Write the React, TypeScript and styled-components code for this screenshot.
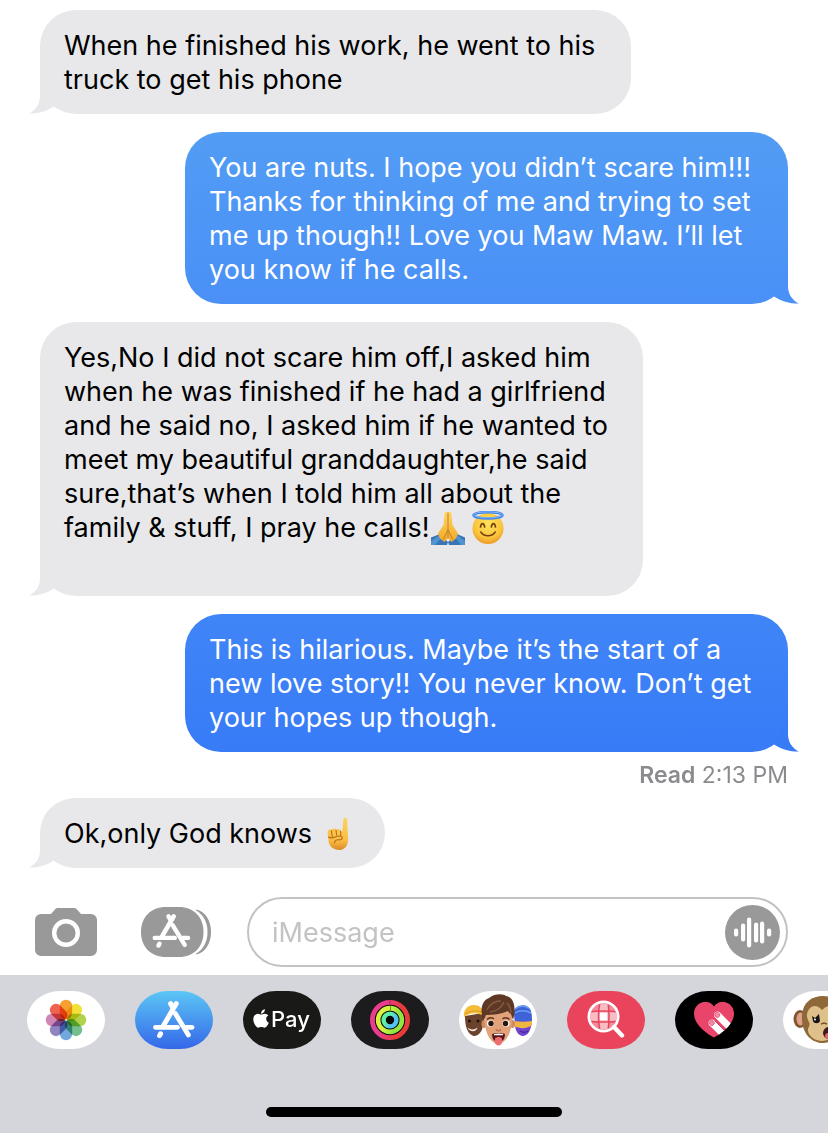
import React from "react";
import styled, { createGlobalStyle } from "styled-components";
import { FaApple } from "react-icons/fa";

const GlobalStyle = createGlobalStyle`
  * { box-sizing: border-box; }
  body {
    margin: 0;
    background: #ffffff;
    color: #000000;
    font-family: Inter, "Noto Sans", sans-serif;
    overflow-x: hidden;
  }
  button { border: 0; padding: 0; background: none; cursor: pointer; }
`;

const Page = styled.div`
  display: flex;
  flex-direction: column;
  min-height: 100vh;
  overflow: hidden;
`;

const Thread = styled.ol`
  list-style: none;
  margin: 0;
  padding: 10px 40px 11px;
  display: flex;
  flex-direction: column;
`;

const Message = styled.li<{ $sent?: boolean; $receipt?: boolean }>`
  display: flex;
  flex-direction: column;
  align-items: ${(p) => (p.$sent ? "flex-end" : "flex-start")};
  margin-bottom: ${(p) => (p.$receipt ? 0 : 18)}px;
`;

const Bubble = styled.div<{ $from: string; $to: string; $ink: string; $width: number }>`
  position: relative;
  width: ${(p) => p.$width}px;
  max-width: 100%;
  padding: 19px 24px 17px;
  border-radius: 36px;
  background: linear-gradient(${(p) => p.$from}, ${(p) => p.$to});
  color: ${(p) => p.$ink};
  font-size: 27px;
  line-height: 34px;
  white-space: pre-line;
`;

const TailShape = styled.svg<{ $sent?: boolean }>`
  position: absolute;
  bottom: 0;
  ${(p) => (p.$sent ? "right: -11px; transform: scaleX(-1);" : "left: -11px;")}
`;

const Emoji = styled.svg`
  width: 36px;
  height: 34px;
  margin-right: 4px;
  vertical-align: bottom;
`;

const Receipt = styled.div`
  color: #8b8b8f;
  font-size: 23px;
  line-height: 46px;
  b { font-weight: 600; }
`;

const Composer = styled.form`
  display: flex;
  align-items: center;
  gap: 35px;
  padding: 0 40px 8px 35px;
`;

const ToolButton = styled.button`
  display: flex;
  width: 71px;
  flex: none;
`;

const Field = styled.div`
  flex: 1;
  min-width: 0;
  display: flex;
  align-items: center;
  height: 70px;
  padding: 0 6px 0 23px;
  border: 2px solid #c3c3c5;
  border-radius: 35px;
`;

const TextInput = styled.input`
  flex: 1;
  min-width: 0;
  border: 0;
  outline: 0;
  padding: 2px 0 0;
  background: transparent;
  font: 27px/34px Inter, "Noto Sans", sans-serif;
  &::placeholder { color: #c3c3c6; opacity: 1; }
`;

const VoiceButton = styled.button`
  display: flex;
  width: 55px;
  height: 55px;
`;

const Drawer = styled.footer`
  flex: 1;
  display: flex;
  flex-direction: column;
  justify-content: space-between;
  align-items: center;
  gap: 40px;
  padding: 16px 0;
  background: #d5d6dc;
`;

const AppStrip = styled.nav`
  align-self: stretch;
  display: flex;
  gap: 30px;
  padding-left: 27px;
  overflow: hidden;
`;

const AppButton = styled.button<{ $bg: string }>`
  flex: none;
  display: flex;
  align-items: center;
  justify-content: center;
  width: 78px;
  height: 58px;
  overflow: hidden;
  border-radius: 34px / 30px;
  background: ${(p) => p.$bg};
`;

const PayMark = styled.span`
  display: flex;
  align-items: center;
  gap: 2px;
  padding: 0 1px 3px 0;
  color: #ffffff;
  font: 500 22px/26px Inter, sans-serif;
  svg { width: 16px; height: 21px; }
`;

const HomeIndicator = styled.div`
  width: 296px;
  height: 10px;
  border-radius: 5px;
  background: #000000;
`;

const Tail = ({ color, sent }: { color: string; sent?: boolean }) => (
  <TailShape $sent={sent} width="36" height="36" viewBox="0 0 36 36" aria-hidden="true">
    <path d="M11 0V18C11 26 7 32 0 35.6C9 35.8 18 33 25 28.4L26 27.5A36 36 0 0 1 12 0Z" fill={color} />
  </TailShape>
);

const PrayingHands = () => (
  <Emoji viewBox="0 0 36 34" role="img" aria-label="Folded hands">
    <defs>
      <linearGradient id="pray" x1="0" y1="0" x2="0" y2="1">
        <stop offset="0" stopColor="#ffd65a" />
        <stop offset="1" stopColor="#f2a92b" />
      </linearGradient>
    </defs>
    <path d="M1 26.5L10 23l8 8-1 3H1zM35 26.5L27 23l-9 8 1 3h16z" fill="#3775b8" />
    <path d="M1 30l9-6 3 1-8 9H1zM35 30l-8-6-3 1 7 9h4z" fill="#4f93d2" />
    <path d="M17.8 1.5C16.6 0 14.700 .8 14.600 3L13.500 14 8 22.500l2 5 4.500 3.500 3.400-4z" fill="url(#pray)" />
    <path d="M18.200 1.500C19.400 0 21.300 .8 21.400 3l1.100 11L28 22.500l-2 5-4.500 3.500-3.400-4z" fill="url(#pray)" />
    <path d="M18 2v25M18 19l-4.500 9M18 19l4.500 9" stroke="#c37c1c" strokeWidth="1" fill="none" strokeLinecap="round" />
  </Emoji>
);

const HaloFace = () => (
  <Emoji viewBox="0 0 36 34" role="img" aria-label="Smiling face with halo">
    <defs>
      <radialGradient id="face" cx="0.5" cy="0.35" r="0.65">
        <stop offset="0" stopColor="#ffe45c" />
        <stop offset="0.7" stopColor="#fbc33c" />
        <stop offset="1" stopColor="#ec9a28" />
      </radialGradient>
    </defs>
    <circle cx="18" cy="17.500" r="15.500" fill="url(#face)" />
    <ellipse cx="18" cy="4.300" rx="14.500" ry="3.200" fill="none" stroke="#3f82e8" strokeWidth="2.600" />
    <ellipse cx="18" cy="3.900" rx="14.500" ry="3" fill="none" stroke="#7db8fa" strokeWidth="1" />
    <path d="M10.500 16c.7-4.600 3.400-4.600 4.200 0M21.300 16c.8-4.600 3.500-4.600 4.200 0" stroke="#76430f" strokeWidth="1.700" fill="none" strokeLinecap="round" />
    <path d="M10.800 21c3 5 11.400 5 14.400 0" stroke="#76430f" strokeWidth="1.500" fill="none" strokeLinecap="round" />
  </Emoji>
);

const PointingUp = () => (
  <Emoji viewBox="0 0 36 34" role="img" aria-label="Index finger pointing up">
    <defs>
      <linearGradient id="point" x1="0" y1="0" x2="0" y2="1">
        <stop offset="0" stopColor="#ffd25b" />
        <stop offset="0.700" stopColor="#f9bd45" />
        <stop offset="1" stopColor="#dc8a27" />
      </linearGradient>
    </defs>
    <path d="M23.500 2c.2-1.600 3.400-1.600 3.500 0l1 17.500C29 26 26 33 19.500 33 13 33 9.500 29.500 8.500 24L7.600 15.500c-.3-3 2.500-3.600 3.700-2.200 1-2.300 4-2.300 4.700-.3 1.300-1.800 4-1.200 4.500.7l1.700 1z" fill="url(#point)" />
    <path d="M11.400 13.500l.8 6M16 13l.6 5M20.600 14l.2 4.500M8.500 20c5 3 7-2 12-.8 3 .8 2 4-1.500 3.600-3-.3-4.500 1-4.500 3" stroke="#b76b17" strokeWidth="1.100" fill="none" strokeLinecap="round" />
  </Emoji>
);

const StoreMark = () => (
  <g fill="none" stroke="#ffffff" strokeLinecap="round">
    <path d="M17.600 2.600L20 6.600" strokeWidth="5" />
    <path d="M23.300 2.600L10.500 24.500" strokeWidth="5" />
    <path d="M22.300 12.500L35.400 34" strokeWidth="4.800" />
    <path d="M2.500 26.300H24.500" strokeWidth="4.800" />
    <path d="M33 26.300H39" strokeWidth="4.800" />
    <path d="M7.600 32.800L6.600 34.600" strokeWidth="5" />
  </g>
);

const CameraIcon = () => (
  <svg width="62" height="48" viewBox="0 0 62 48" aria-hidden="true">
    <path d="M6 6h10l4-4.500C21 .4 22 0 23.500 0h15C40 0 41 .4 42 1.500L46 6h10a6 6 0 0 1 6 6v30a6 6 0 0 1-6 6H6a6 6 0 0 1-6-6V12a6 6 0 0 1 6-6z" fill="#999999" />
    <circle cx="31" cy="25" r="11.800" fill="none" stroke="#ffffff" strokeWidth="4.400" />
  </svg>
);

const DrawerIcon = () => (
  <svg width="71" height="50" viewBox="0 0 71 50" aria-hidden="true">
    <path d="M55 2.500C64 4 70 13.500 70 25s-6 21-15 22.500z" fill="#999999" />
    <path d="M26 0h15c15.500 0 25.500 10 25.500 25S56.500 50 41 50z" fill="#ffffff" />
    <path d="M25 0h13c14.500 0 24.500 10 24.500 25S52.500 50 38 50H25C10 50 0 40 0 25S10 0 25 0z" fill="#999999" />
    <g transform="translate(11.500 7) scale(.91)"><StoreMark /></g>
  </svg>
);

const bars = [
  [11, 8],
  [18, 18],
  [24, 30],
  [31, 20],
  [37, 22],
  [44, 8],
];

const VoiceIcon = () => (
  <svg width="55" height="55" viewBox="0 0 55 55" aria-hidden="true">
    <circle cx="27.500" cy="27.500" r="27.500" fill="#999999" />
    {bars.map(([x, h]) => (
      <rect key={x} x={x - 2} y={27.5 - h / 2} width="4.200" height={h} rx="2.100" fill="#ffffff" />
    ))}
  </svg>
);

const petals = ["#f7a030", "#f2e13b", "#b1d24a", "#74bf8b", "#73a8dc", "#9085c0", "#d087b5", "#ee6450"];

const PhotosIcon = () => (
  <svg width="42" height="42" viewBox="-21 -21 42 42" aria-hidden="true">
    {petals.map((c, i) => (
      <rect key={c} x="-6.200" y="-20.300" width="12.400" height="19.500" rx="6.200" fill={c} transform={`rotate(${i * 45})`} style={{ mixBlendMode: "multiply" }} />
    ))}
  </svg>
);

const StoreIcon = () => (
  <svg width="42" height="38" viewBox="0 0 42 38" aria-hidden="true">
    <StoreMark />
  </svg>
);

const rings = [
  { r: 17.6, w: 4.8, left: "#e93d8d", right: "#e83c3a" },
  { r: 11.9, w: 4.6, left: "#d9f23e", right: "#93e63f" },
  { r: 6.4, w: 4.4, left: "#5ff0a8", right: "#55c3f5" },
];

const ActivityIcon = () => (
  <svg width="42" height="42" viewBox="-21 -21 42 42" aria-hidden="true">
    <defs>
      {rings.map((g, i) => (
        <linearGradient key={g.r} id={`ring${i}`} gradientUnits="userSpaceOnUse" x1={-g.r} y1="-4" x2={g.r} y2="4">
          <stop offset="0.300" stopColor={g.left} />
          <stop offset="0.750" stopColor={g.right} />
        </linearGradient>
      ))}
    </defs>
    <circle r="20" fill="#08080a" />
    {rings.map((g, i) => (
      <circle key={g.r} r={g.r} fill="none" stroke={`url(#ring${i})`} strokeWidth={g.w} />
    ))}
    <path d="M0-20v4.800" stroke="#b8234e" strokeWidth="1" />
    <path d="M.5-14.200v4.600" stroke="#5a9d26" strokeWidth="1" />
  </svg>
);

const MemojiIcon = () => (
  <svg width="78" height="58" viewBox="0 0 78 58" aria-hidden="true">
    <path d="M6 25c0 12 3 18 8.500 20 5 .5 9.500-5 9.500-12V22z" fill="#6b432c" />
    <path d="M5 26c-1-7 3-12 10-12 5 0 8 3 9 6l-1 4C16 21 10 22 5 26z" fill="#f5bd37" />
    <path d="M6 23c6-3.500 11-4 17-2" stroke="#d99a23" strokeWidth="1" fill="none" />
    <path d="M8.500 36.500c3 2.500 7 2.500 10 0-1 5-8 5-10 0z" fill="#f4e7df" />
    <circle cx="10.500" cy="30" r="1.500" fill="#1d120d" />
    <circle cx="19" cy="30" r="1.500" fill="#1d120d" />
    <path d="M55 20c4-6 15-6 17.500 3 1 11-1 21-8 22-5 .3-8.500-5-8.500-12z" fill="#6f44cf" />
    <path d="M55 22c0-9 14-11 17-2l1 10H56z" fill="#3e62d8" />
    <path d="M56 18c3-3 10-4 15 0M56 22c4-3 11-3 16 0" stroke="#6aa0f1" strokeWidth="1.500" fill="none" />
    <path d="M55 30c6 1 12 1 18 0v4c-5 4-12 4-18 1z" fill="#efb644" />
    <path d="M61 40c3 2 5 2 8 0" stroke="#45289a" strokeWidth="1.500" fill="none" />
    <ellipse cx="25" cy="33" rx="2.500" ry="4" fill="#d28a62" />
    <ellipse cx="53.500" cy="33" rx="2.500" ry="4" fill="#d28a62" />
    <path d="M25.500 24c0-8 5-12 13.800-12S53 16 53 24c.5 13-3 26-13.700 30C28.500 50 25 37 25.500 24z" fill="#e2a27a" />
    <path d="M24.500 30C20 17 24 9 30 7c6-5 15-4 17-2 7 1 11 10 7 24l-2-6c-1-1-2-1-3-3-7 3-15 4-22 4z" fill="#5c3825" />
    <path d="M28 19c3-6 8-9 14-9M31 21c7-1 12-5 14-10M48 12c3 3 4 6 4 10" stroke="#8a5b40" strokeWidth="1.300" fill="none" />
    <path d="M28 28.500c2-2 5-2 7-.7M43.500 27.800c2-1.300 5-1.300 7 .7" stroke="#60351f" strokeWidth="1.600" fill="none" />
    <ellipse cx="31.500" cy="32.500" rx="3.600" ry="3.200" fill="#ffffff" />
    <ellipse cx="47" cy="32.500" rx="3.600" ry="3.200" fill="#ffffff" />
    <circle cx="32" cy="32.500" r="2.700" fill="#28170f" />
    <circle cx="46.500" cy="32.500" r="2.700" fill="#28170f" />
    <path d="M37 38.500c1.500 1.500 3.500 1.500 5 0" stroke="#b96f49" strokeWidth="1.500" fill="none" />
    <path d="M33 43c4-1.500 9-1.500 13 0 0 5-2.500 8-6.500 8S33 48 33 43z" fill="#56191a" />
    <path d="M35 43c3-.7 6-.7 9 0v1.300h-9z" fill="#ffffff" />
    <path d="M36 47.500c2-2 5-2 7 0v4c-1 4-6 4-7 0z" fill="#ec6e72" />
  </svg>
);

const ImageSearchIcon = () => (
  <svg width="38" height="40" viewBox="0 0 38 40" aria-hidden="true">
    <defs>
      <clipPath id="globe"><circle cx="16.500" cy="16.500" r="13" /></clipPath>
    </defs>
    <g clipPath="url(#globe)">
      <path d="M0 0h38v38H0z" fill="#f28b9a" />
      <path d="M12 3h9v9h-9zM3 12h9v9H3zM21 12h9v9h-9zM12 21h9v9h-9z" fill="#f8bcc5" />
      <path d="M12.500 12.500h8v8h-8z" fill="#ffffff" />
      <path d="M13 2q-3 14.500 0 29M21 2q2 14.500 0 29M2 12q14.500-2 29 0M2 21q14.500 2 29 0" stroke="#e9445c" strokeWidth="1.500" fill="none" />
    </g>
    <circle cx="16.500" cy="16.500" r="14.600" fill="none" stroke="#ffffff" strokeWidth="2.800" />
    <path d="M27 27l8 8.500" stroke="#ffffff" strokeWidth="4.400" strokeLinecap="round" />
  </svg>
);

const TouchIcon = () => (
  <svg width="40" height="36" viewBox="0 0 40 36" aria-hidden="true">
    <defs>
      <clipPath id="heart">
        <path d="M20 35.500C16 33.500 0 24 0 11.500 0 .5 14-4.500 20 4.500c6-9 20-4 20 7C40 24 24 33.500 20 35.500z" />
      </clipPath>
    </defs>
    <g clipPath="url(#heart)">
      <path d="M0 0h40v36H0z" fill="#e9456b" />
      <g stroke="#ffffff" strokeWidth="6.800" strokeLinecap="round">
        <path d="M23.500 13L42 31.500" />
        <path d="M18 21L36 39" />
      </g>
      <path d="M20.500 18.500L36 34" stroke="#c92c51" strokeWidth=".8" />
      <g fill="#f48ca4" stroke="#d93c61" strokeWidth=".7">
        <rect x="21" y="10.500" width="4.600" height="4.800" rx="1.800" transform="rotate(-45 23.300 12.900)" />
        <rect x="15.500" y="18.500" width="4.600" height="4.800" rx="1.800" transform="rotate(-45 17.800 20.900)" />
      </g>
    </g>
  </svg>
);

const MonkeyIcon = () => (
  <svg width="78" height="58" viewBox="0 0 78 58" aria-hidden="true">
    <ellipse cx="17" cy="28" rx="6.500" ry="9" fill="#80582f" />
    <ellipse cx="17.500" cy="28" rx="4" ry="6.500" fill="#dfa18c" />
    <ellipse cx="62" cy="28" rx="6.500" ry="9" fill="#80582f" />
    <path d="M19 24C20 11 29 5 40 5s20 7 20 20c0 17-8 27-20 27S18 42 19 24z" fill="#8f6839" />
    <path d="M25 20c3-6 9-7 14-1 6-6 13-5 16 1 2 8-1 12-2 17-2 9-8 13-14 13s-13-4-14-10c-1-3 3-5 1-9s-3-7-1-11z" fill="#dfc08b" />
    <path d="M29 25l3 2 4-4 1 7c-1 3-6 3-7 0z" fill="#171312" />
    <path d="M46 24c2-3 6-3 8 0v7c-2 2-6 2-8 0z" fill="#171312" />
    <circle cx="32" cy="28.500" r="1" fill="#ffffff" />
    <path d="M38 33l3-1 3 1" stroke="#79512b" strokeWidth="1.500" fill="none" />
    <ellipse cx="46" cy="42" rx="6" ry="6" fill="#421819" />
    <ellipse cx="46" cy="45" rx="4" ry="3" fill="#d96870" />
  </svg>
);

const GREY = "#e8e8ea";

export default function App() {
  return (
    <>
      <GlobalStyle />
      <Page>
        <Thread>
          <Message>
            <Bubble $from={GREY} $to={GREY} $ink="#000000" $width={591}>
              {"When he finished his work, he went to his\ntruck to get his phone"}
              <Tail color={GREY} />
            </Bubble>
          </Message>
          <Message $sent>
            <Bubble $from="#529cf4" $to="#4a90f7" $ink="#ffffff" $width={603}>
              {"You are nuts. I hope you didn’t scare him!!!\nThanks for thinking of me and trying to set\nme up though!! Love you Maw Maw. I’ll let\nyou know if he calls."}
              <Tail color="#4a90f7" sent />
            </Bubble>
          </Message>
          <Message>
            <Bubble $from={GREY} $to={GREY} $ink="#000000" $width={603}>
              {"Yes,No I did not scare him off,I asked him\nwhen he was finished if he had a girlfriend\nand he said no, I asked him if he wanted to\nmeet my beautiful granddaughter,he said\nsure,that’s when I told him all about the\nfamily & stuff, I pray he calls!"}
              <PrayingHands />
              <HaloFace />
              {"\n\u00a0"}
              <Tail color={GREY} />
            </Bubble>
          </Message>
          <Message $sent $receipt>
            <Bubble $from="#4085f7" $to="#387bf7" $ink="#ffffff" $width={603}>
              {"This is hilarious. Maybe it’s the start of a\nnew love story!! You never know. Don’t get\nyour hopes up though."}
              <Tail color="#387bf7" sent />
            </Bubble>
            <Receipt><b>Read</b> 2:13 PM</Receipt>
          </Message>
          <Message>
            <Bubble $from={GREY} $to={GREY} $ink="#000000" $width={345}>
              {"Ok,only God knows "}
              <PointingUp />
              <Tail color={GREY} />
            </Bubble>
          </Message>
        </Thread>

        <Composer onSubmit={(e) => e.preventDefault()}>
          <ToolButton type="button" aria-label="Camera"><CameraIcon /></ToolButton>
          <ToolButton type="button" aria-label="Apps"><DrawerIcon /></ToolButton>
          <Field>
            <TextInput type="text" placeholder="iMessage" aria-label="iMessage" />
            <VoiceButton type="button" aria-label="Record audio"><VoiceIcon /></VoiceButton>
          </Field>
        </Composer>

        <Drawer>
          <AppStrip aria-label="iMessage apps">
            <AppButton $bg="#ffffff" aria-label="Photos"><PhotosIcon /></AppButton>
            <AppButton $bg="linear-gradient(#5cc6f5, #3467e8)" aria-label="App Store"><StoreIcon /></AppButton>
            <AppButton $bg="#191917">
              <PayMark><FaApple aria-label="Apple" />Pay</PayMark>
            </AppButton>
            <AppButton $bg="#1c1c1f" aria-label="Activity"><ActivityIcon /></AppButton>
            <AppButton $bg="#ffffff" aria-label="Memoji"><MemojiIcon /></AppButton>
            <AppButton $bg="#e9445c" aria-label="Images"><ImageSearchIcon /></AppButton>
            <AppButton $bg="#000000" aria-label="Digital Touch"><TouchIcon /></AppButton>
            <AppButton $bg="#ffffff" aria-label="Animoji"><MonkeyIcon /></AppButton>
          </AppStrip>
          <HomeIndicator />
        </Drawer>
      </Page>
    </>
  );
}
